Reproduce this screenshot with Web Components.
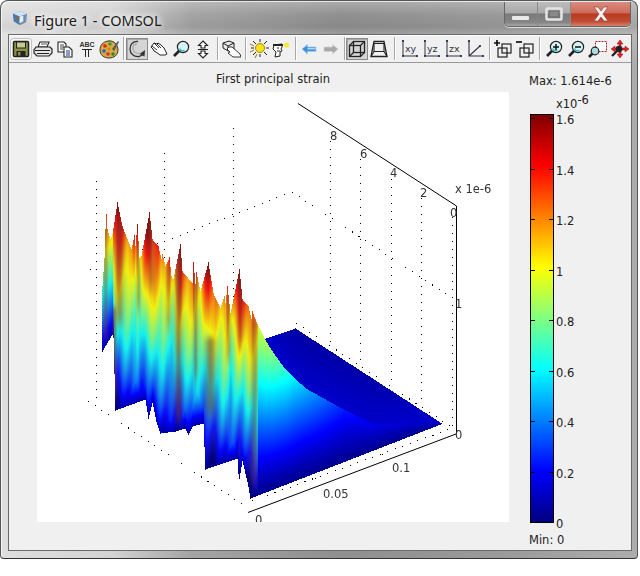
<!DOCTYPE html>
<html>
<head>
<meta charset="utf-8">
<title>Figure 1 - COMSOL</title>
<style>
body{margin:0;background:#fff;font-family:"DejaVu Sans",sans-serif;}
</style>
</head>
<body>
<figure-window label="Figure 1 - COMSOL">
  <fig-toolbar></fig-toolbar>
  <plot-panel></plot-panel>
</figure-window>

<script>
// toolbar icons, all on a 20x20 box
const lens = (cx, cy, extra) => `<path d="M${cx-4} ${cy+4}L${cx-9} ${cy+9}" stroke="#222" stroke-width="2.6"/><circle cx="${cx}" cy="${cy}" r="5.6" fill="#d6f4f6" stroke="#222" stroke-width="1.2"/><path d="M${cx-3.5} ${cy+1.500}a4 4 0 0 0 5 2" stroke="#2bb7c9" stroke-width="1.4" fill="none"/>${extra||''}`;
const axes = `<path d="M4 1.500V17H18" fill="none" stroke="#334" stroke-width="1"/><circle cx="4" cy="2" r="1.1" fill="#124"/><circle cx="18" cy="17" r="1.1" fill="#124"/><circle cx="4" cy="17" r="1" fill="#124"/>`;
const axisText = t => `${axes}<text x="6" y="12.500" font-family="DejaVu Sans" font-size="9.500" fill="#334">${t}</text>`;
const twoBoxes = sign => `<rect x="9" y="5" width="9" height="9" fill="none" stroke="#222" stroke-width="1.2"/><rect x="5" y="9" width="9" height="9" fill="none" stroke="#222" stroke-width="1.2"/>${sign}`;
const ICONS = {
  save:`<rect x="2.500" y="2.500" width="15" height="15" rx="1" fill="#8f8f48" stroke="#222" stroke-width="1.500"/><rect x="5.500" y="3" width="9" height="6" fill="#c9c98c" stroke="#222"/><rect x="5.500" y="12" width="9" height="5.500" fill="#222"/><rect x="7" y="13" width="2.500" height="3.500" fill="#8f8f48"/>`,
  print:`<path d="M7 3h9l-2 5H5z" fill="#fff" stroke="#222" stroke-width="1.100"/><path d="M3 8h14l2 2v4l-3 3H4l-3-3v-3z" fill="#e6e6e6" stroke="#222" stroke-width="1.200"/><path d="M2 11.500h15M4 14.500h12" stroke="#222"/><path d="M8 5h6" stroke="#555"/>`,
  copy:`<path d="M3 3h6l2 2v8H3z" fill="#fff" stroke="#222" stroke-width="1.100"/><path d="M5 6h4M5 8h4M5 10h3" stroke="#234" stroke-width=".9"/><path d="M9 8h5l3 3v7H9z" fill="#fff" stroke="#222" stroke-width="1.100"/><path d="M11 12h4M11 14h4M11 16h4" stroke="#139" stroke-width="1.100"/>`,
  abc:`<text x="10" y="8" text-anchor="middle" font-family="Liberation Sans" font-size="7" font-weight="700" fill="#333">ABC</text><path d="M5 10.500h10M8.500 10.500v7.500M11.500 10.500v7.500" stroke="#222" fill="none"/>`,
  palette:`<path d="M9 2c6-1 10 4 10 9s-4 8-9 8-9-3-9-8 3-8 8-9z" fill="#d9ab3f" stroke="#333"/><circle cx="6" cy="7" r="1.800" fill="#d22"/><circle cx="11" cy="5" r="1.700" fill="#2a9d3a"/><circle cx="5" cy="12" r="1.800" fill="#26c"/><circle cx="9" cy="15" r="1.800" fill="#c33"/><circle cx="14" cy="15" r="1.700" fill="#283"/><circle cx="10" cy="10" r="1.400" fill="#e07a20"/><path d="M13 10l6-8 1 1-5 9z" fill="#556"/>`,
  rotate:`<path d="M11 2.500C6 2 3 5 3 10c0 5 4 8 9 7.500l4-2" fill="none" stroke="#333" stroke-width="1.300"/><path d="M10 4.500C7 5 5.500 7.500 6 10.500c1 3 4 4.500 7 3.500" fill="none" stroke="#aaa" stroke-width="1.300"/><path d="M18 11l-.5 6.500-5-2.500z" fill="#333"/>`,
  pan:`<path d="M2 8l3-4 3 1 1-1 3 2 3 3 3 6-2 1-5 0-4-3-2-1-1-2z" fill="#fff" stroke="#222"/><path d="M5 4l5 5M8 5l4 4M3 7l5 4" stroke="#222" stroke-width=".9"/>`,
  zoom:lens(12,8),
  updown:`<path d="M10 2l4.500 4.500H12V9H8V6.500H5.500zM8 12h4v2.500h2.500L10 19l-4.500-4.500H8z" fill="#fff" stroke="#222" stroke-width="1.100"/><path d="M5 10.500h10" stroke="#222"/>`,
  hand:`<path d="M2 4l6-2 5 2v6l-6 2-5-3z" fill="#e6e6e6" stroke="#222"/><path d="M2 4l5 3 6-3M7 7v5" stroke="#222" fill="none"/><path d="M8 8l3 0 8 7 1 3-8 0-5-4 2-1-3-3z" fill="#fff" stroke="#222" stroke-width=".9"/>`,
  light:`<circle cx="11" cy="9" r="4.500" fill="#f6e21a" stroke="#9a8a10"/><path d="M11 0v3M11 15v3M2 9h3M17 9h3M4 2l3 3M18 2l-3 3M4 16l3-3M18 16l-3-3" stroke="#222"/><path d="M1 5l4 2M1 13l4-2M6 19l2-4" stroke="#8a7a10"/>`,
  head:`<path d="M3 6l8-1v3l-1 2 1 2-2 1v4l-5 1 1-5-3-3z" fill="#fff" stroke="#222"/><path d="M2 6h10" stroke="#222" stroke-width="2"/><path d="M6 9h2M6 12h3" stroke="#222"/><circle cx="15.500" cy="6" r="2.600" fill="#f6e83a"/>`,
  left:`<path d="M3 10l5.500-4.500v2.500h8.500v4.500H8.500v2.500z" fill="#3f8fdb" stroke="#a5cdf0" stroke-width=".8"/><path d="M8.500 9h8v1.500h-8z" fill="#a8d6f6"/>`,
  right:`<path d="M17 10l-5.500-4.500v2.500H3v4.500h8.500v2.500z" fill="#a8a8a8" stroke="#d0d0d0" stroke-width=".8"/>`,
  cube:`<rect x="2.500" y="6.500" width="11" height="11" fill="none" stroke="#222" stroke-width="1.300"/><rect x="6.500" y="2.500" width="11" height="11" fill="none" stroke="#222" stroke-width="1.300"/><path d="M2.500 6.500l4-4M13.500 6.500l4-4M2.500 17.500l4-4M13.500 17.500l4-4" stroke="#222" stroke-width="1.100"/>`,
  room:`<path d="M5 2.500h10l3 15H2z" fill="none" stroke="#222" stroke-width="1.300"/><path d="M5 4.500h10v8H5zM2 17.500l3-5M18 17.500l-3-5" fill="none" stroke="#222" stroke-width="1.100"/>`,
  xy:axisText('xy'),yz:axisText('yz'),zx:axisText('zx'),
  persp:`<path d="M4 2V17H18M4 17L15 7" fill="none" stroke="#334" stroke-width="1.100"/><circle cx="4" cy="2" r="1.100" fill="#124"/><circle cx="18" cy="17" r="1.100" fill="#124"/><circle cx="15" cy="7" r="1" fill="#124"/>`,
  add:twoBoxes(`<path d="M1 4h6M4 1v6" stroke="#111" stroke-width="1.700"/>`),
  remove:twoBoxes(`<path d="M1 3h6" stroke="#111" stroke-width="1.700"/>`),
  zoomin:lens(12,8,`<path d="M9 8h6M12 5v6" stroke="#111" stroke-width="1.500"/>`),
  zoomout:lens(12,8,`<path d="M9 8h6" stroke="#111" stroke-width="1.500"/>`),
  zoombox:`<rect x="7.500" y="2.500" width="11" height="10" fill="#fff" stroke="#a22" stroke-dasharray="2 1"/><path d="M5 14L1 18" stroke="#222" stroke-width="2.600"/><circle cx="7" cy="12" r="3.800" fill="#a8dde0" stroke="#222" stroke-width="1.200"/>`,
  move:`<path d="M10 1l3 4h-2v4h4V7l4 3-4 3v-2h-4v4h2l-3 4-3-4h2v-4H5v2l-4-3 4-3v2h4V5H7z" fill="#d22" stroke="#911" stroke-width=".5"/><path d="M2 17l5-5" stroke="#222" stroke-width="2.400"/><circle cx="9" cy="10" r="3.300" fill="#222"/>`
};

// title bar with the app icon and the three caption buttons
const titleTpl = document.createElement('template');
titleTpl.innerHTML = `
<style>
:host{display:flex;height:33px;align-items:flex-start;}
.ico{margin:9px 6px 0 3px;width:16px;height:16px;flex:none;}
.txt{font:14.500px "Noto Sans",sans-serif;color:#1a1a1a;margin-top:9px;line-height:20px;text-shadow:0 0 6px #fff,0 0 8px #fff,0 0 10px #eee;flex:1;}
.caps{display:flex;height:24px;margin-top:1px;border:1px solid #666;border-top:none;border-radius:0 0 5px 5px;overflow:hidden;box-shadow:0 1px 0 #ddd;}
.c{display:flex;align-items:center;justify-content:center;height:100%;border-right:1px solid #888;}
.min,.max{width:32px;background:linear-gradient(#bcbcbc,#aaaaaa 45%,#7a7a7a 50%,#858585 85%,#a8a8a8);}
.close{width:59px;border:none;background:linear-gradient(#d98c80,#cf6a58 45%,#b93a22 50%,#c04a32 80%,#d6806a);}
</style>
<svg class="ico" viewBox="0 0 17 17"><path d="M1 4l7-3 8 3-1 9-6 3-7-4z" fill="#6f8fb0"/><path d="M1 4l7 3 8-3-8-3z" fill="#cfe0ee"/><path d="M8 7v9l-6-4-1-8z" fill="#4b78ad"/><path d="M8 7l4-1v6l-4 2z" fill="#e7eef5"/><circle cx="6" cy="9" r="1.800" fill="#8a6a4a"/></svg>
<div class="txt"></div>
<div class="caps">
  <div class="c min"><svg width="18" height="12"><rect x="0" y="8" width="17" height="4" rx="1" fill="#e8e8e8"/></svg></div>
  <div class="c max"><svg width="18" height="14"><rect x="1.500" y="1.500" width="15" height="11" rx="1" fill="none" stroke="#e4e4e4" stroke-width="2.500"/><rect x="4" y="4" width="10" height="6" fill="#8a8a8a" stroke="#666"/></svg></div>
  <div class="c close"><svg width="20" height="16"><path d="M3 1h4l3 4 3-4h4l-5 7 5 7h-4l-3-4-3 4H3l5-7z" fill="#f2f0f0" stroke="#8a3a30" stroke-width=".6"/></svg></div>
</div>`;
class TitleBar extends HTMLElement {
  constructor(){
    super();
    this.attachShadow({mode:'open'});
    this.shadowRoot.appendChild(titleTpl.content.cloneNode(true));
  }
  set label(v){ this.shadowRoot.querySelector('.txt').textContent = v; }
}
customElements.define('title-bar', TitleBar);

const winTpl = document.createElement('template');
winTpl.innerHTML = `
<style>
:host{display:flex;flex-direction:column;width:638px;height:559px;box-sizing:border-box;padding:0 6px 8px 8px;
  border:1px solid #555;border-bottom-color:#333;border-radius:8px 8px 4px 4px;
  background:
    linear-gradient(rgba(255,255,255,.25),rgba(255,255,255,0) 14px,rgba(0,0,0,.05) 26px,rgba(255,255,255,.15) 34px,rgba(0,0,0,0) 60px),
    linear-gradient(90deg,#dedede 0,#d4d4d4 110px,#a4a4a4 190px,#8f8f8f 340px,#9a9a9a 500px,#adadad 100%);
  box-shadow:inset 1px 1px 0 rgba(255,255,255,.7);}
.client{display:flex;flex-direction:column;flex:1;background:#f0f0f0;border:1px solid #6a6a6a;margin:0 -1px -1px -1px;}
</style>
<title-bar></title-bar>
<div class="client"><slot></slot></div>`;
class FigureWindow extends HTMLElement {
  constructor(){
    super();
    this.attachShadow({mode:'open'});
    this.shadowRoot.appendChild(winTpl.content.cloneNode(true));
    this.shadowRoot.querySelector('title-bar').label = this.getAttribute('label');
  }
}
customElements.define('figure-window', FigureWindow);

const btnTpl = document.createElement('template');
btnTpl.innerHTML = `
<style>
:host{display:flex;align-items:center;justify-content:center;width:22px;height:22px;box-sizing:border-box;flex:none;}
:host([pressed]){background:#d4d4d4;border:1px solid #8a8a8a;box-shadow:inset 1px 1px 0 #aaa;}
:host([hot]){background:#f6f6f6;border:1px solid #c4c4c4;border-radius:3px;}
svg{width:20px;height:20px;flex:none;display:block;}
</style>
<svg viewBox="0 0 20 20"></svg>`;
class ToolBtn extends HTMLElement {
  constructor(){
    super();
    this.attachShadow({mode:'open'});
    this.shadowRoot.appendChild(btnTpl.content.cloneNode(true));
  }
  connectedCallback(){
    this.shadowRoot.querySelector('svg').innerHTML = ICONS[this.getAttribute('icon')];
  }
}
customElements.define('tool-btn', ToolBtn);

const barTpl = document.createElement('template');
barTpl.innerHTML = `
<style>
:host{display:flex;align-items:center;height:28px;padding-left:1px;border-bottom:1px solid #9a9a9a;background:#f0f0f0;box-shadow:inset 0 1px 0 #fff;box-sizing:border-box;flex:none;}
.sep{height:23px;flex:none;display:flex;justify-content:center;}
.sep::after{content:"";width:1px;height:100%;background:#a8a8a8;box-shadow:1px 0 0 #fff;}
</style>`;
// icon name, or a number for a separator of that width
const TOOLS = ['save','print','copy','abc','palette',6,'rotate','pan','zoom','updown',6,'hand',6,'light','head',6,'left','right',4,'cube','room',8,'xy','yz','zx','persp',6,'add','remove',7,'zoomin','zoomout','zoombox','move'];
class FigToolbar extends HTMLElement {
  constructor(){
    super();
    this.attachShadow({mode:'open'});
    this.shadowRoot.appendChild(barTpl.content.cloneNode(true));
    for (const t of TOOLS) {
      if (typeof t === 'number') {
        const s = document.createElement('div');
        s.className = 'sep';
        s.style.width = t + 'px';
        this.shadowRoot.appendChild(s);
      } else {
        const b = document.createElement('tool-btn');
        b.setAttribute('icon', t);
        if (t === 'rotate' || t === 'cube') b.setAttribute('pressed', '');
        if (t === 'save') b.setAttribute('hot', '');
        this.shadowRoot.appendChild(b);
      }
    }
  }
}
customElements.define('fig-toolbar', FigToolbar);

// the colour scale
const scaleTpl = document.createElement('template');
scaleTpl.innerHTML = `
<style>
:host{display:block;position:relative;width:24px;height:409px;box-sizing:border-box;margin-left:1px;border:1px solid #000;
  background:linear-gradient(to top,#000080,#0000ff 12.5%,#00ffff 37.5%,#ffff00 62.5%,#ff0000 87.5%,#800000);font:11.500px "DejaVu Sans",sans-serif;color:#222;}
.ticks{position:absolute;left:0;right:0;top:3px;bottom:-1px;display:flex;flex-direction:column;justify-content:space-between;}
.t{height:1px;position:relative;background:linear-gradient(90deg,#000 4px,transparent 4px,transparent 18px,#000 18px);}
.t span{position:absolute;left:25px;top:-5px;line-height:14px;white-space:nowrap;}
</style>
<div class="ticks"></div>`;
class ColorScale extends HTMLElement {
  constructor(){
    super();
    this.attachShadow({mode:'open'});
    this.shadowRoot.appendChild(scaleTpl.content.cloneNode(true));
    const box = this.shadowRoot.querySelector('.ticks');
    for (const v of ['1.6','1.4','1.2','1','0.8','0.6','0.4','0.2','0']) {
      const t = document.createElement('div');
      t.className = 't';
      t.innerHTML = `<span>${v}</span>`;
      box.appendChild(t);
    }
  }
}
customElements.define('color-scale', ColorScale);

// piecewise linear lookup over [x,y] points
function pl(pts, x){
  if (x <= pts[0][0]) return pts[0][1];
  for (let i = 1; i < pts.length; i++) {
    if (x <= pts[i][0]) {
      const a = pts[i-1], b = pts[i];
      return a[1] + (b[1]-a[1])*(x-a[0])/(b[0]-a[0]);
    }
  }
  return pts[pts.length-1][1];
}
const clamp = v => Math.max(0, Math.min(1, v));
const smooth = (a, b, v) => { const t = clamp((v-a)/(b-a)); return t*t*(3-2*t); };
function jet(v){
  const t = clamp(v/1.614);
  return [clamp(1.5-Math.abs(4*t-3))*255, clamp(1.5-Math.abs(4*t-2))*255, clamp(1.5-Math.abs(4*t-1))*255];
}

// profile of the surface, in window pixels
const TOP = [[102,285],[104,257],[105,228],[106,213],[107,228],[110,238],[112,233],[117,201],[122,225],[127,238],[131,248],[134,234],[135,245],[137,223],[139,257],[141,255],[149,211],[152,238],[158,245],[161,258],[162,253],[165,265],[169,256],[171,275],[173,278],[180,243],[182,270],[192,282],[193,261],[195,283],[196,271],[200,290],[208,261],[213,292],[220,307],[224,295],[225,302],[227,285],[230,312],[239,268],[242,298],[248,305],[251,318],[252,310],[255,318],[264,337],[272,350],[285,368],[295,378],[307,388],[343,408],[373,423],[443,423]];
const BOTTOM = [[102,350],[112,333],[113,336],[115,409],[145,398],[148,417],[152,401],[156,420],[160,432],[175,430],[185,427],[188,433],[192,425],[203,422],[205,468],[237,457],[238.5,480],[242,459],[248,485],[250,497],[443,422]];
const BACK = [[263,338],[295,327],[443,423]];
const PLATE_TOP = [[258,.92],[272,.8],[295,.55],[307,.45],[343,.22],[373,.14],[443,.05]];
// dark sides of the ridges: centre x, half width, strength, y0, y1
const STRIPS = [[105,2.5,.4,215,350],[119,4,.45,215,335],[114,2,.55,300,409],[138,2,.35,225,320],[151,3,.35,215,300],[168,2.5,.3,258,340],[178,3.5,.55,245,432],[195,2.5,.45,262,390],[210,5,.55,330,425],[228,2.5,.35,286,370],[240,3,.35,270,355],[254,3.5,.4,312,495]];

const plotTpl = document.createElement('template');
plotTpl.innerHTML = `
<style>
:host{display:block;position:relative;width:472px;height:430px;background:#fff;flex:none;}
svg,canvas{position:absolute;left:0;top:0;}
text{font:11.500px "DejaVu Sans",sans-serif;fill:#333;}
</style>
<svg class="grid" width="472" height="430" viewBox="37 91 472 430">
  <g class="dots" fill="none" stroke="#000" stroke-dasharray="1 7" shape-rendering="crispEdges"></g>
  <g fill="none" stroke="#000" stroke-width="1">
    <path d="M298 102.500L456.500 205V433"/>
    <path d="M456 433L248 511.500"/>
  </g>
</svg>
<canvas width="472" height="430"></canvas>
<svg width="472" height="430" viewBox="37 91 472 430">
  <text x="330" y="139">8</text><text x="360" y="157">6</text><text x="390" y="176">4</text><text x="420" y="196">2</text><text x="450" y="216">0</text>
  <text x="455" y="192">x 1e-6</text>
  <text x="455" y="307">1</text><text x="455" y="438">0</text>
  <text x="392" y="471">0.1</text><text x="323" y="497">0.05</text><text x="255" y="523">0</text>
</svg>`;
class SurfacePlot extends HTMLElement {
  constructor(){
    super();
    this.attachShadow({mode:'open'});
    this.shadowRoot.appendChild(plotTpl.content.cloneNode(true));
    this.drawGrid();
    this.drawSurface();
  }
  drawGrid(){
    const lines = [
      [96.5,180,96.5,400],[164.5,152,164.5,372],[233.5,127,233.5,350],
      [330.5,140,330.5,345],[360.5,158,360.5,365],[391.5,178,391.5,385],[421.5,197,421.5,405],[452.5,216,452.5,425],
      [90,269,292,191],[292,191,452,297],[296,322,450,425],
      [88,400,248,507],[164,372,320,481],[233,345,385,455],[252,500,450,428]
    ];
    this.shadowRoot.querySelector('.dots').innerHTML = lines.map(l => `<line x1="${l[0]}" y1="${l[1]}" x2="${l[2]}" y2="${l[3]}"/>`).join('');
  }
  pixel(x, y){
    const top = pl(TOP, x), bot = pl(BOTTOM, x);
    const back = x >= 263 ? pl(BACK, x) : 1e9;
    if (y >= back && y < top) {
      return jet(.12 - .07*clamp((top-y)/60));
    }
    if (y < top || y > bot || x < 102 || x > 443) return null;
    if (x >= 258) {
      const t = (bot-y)/(bot-top);
      return jet(pl(PLATE_TOP, x)*Math.pow(t, 1.1) + .025);
    }
    // value goes with height above a base line sloping to the right
    let v = (414 + .55*(x-117) - y)/140;
    // spikes run hotter than the valleys between them
    let mean = 0;
    for (let d = -10; d <= 10; d += 2) mean += pl(TOP, x+d)/11;
    v += (mean-top)*.007*(1-clamp((y-top)/150));
    // long soft streaks running down the folds
    v += .06*Math.sin((x + .07*(y-300))*.5) + .05*Math.sin((x - .1*(y-300))*.21 + 1);
    v = Math.min(v, (bot-y)/(x < 113 ? 100 : 65) + .06);
    let c = jet(v);
    // the lit faces look a little washed out
    const wash = .14*smooth(0, 40, bot-y);
    c = [c[0]*(1-wash)+150*wash, c[1]*(1-wash)+150*wash, c[2]*(1-wash)+120*wash];
    for (const s of STRIPS) {
      const dx = (x-s[0])/s[1];
      const m = s[2]*Math.exp(-dx*dx)*smooth(s[3], s[3]+12, y)*(1-smooth(s[4]-25, s[4], y));
      c = [c[0]*(1-m)+115*m, c[1]*(1-m)+60*m, c[2]*(1-m)+45*m];
    }
    return c;
  }
  drawSurface(){
    const ctx = this.shadowRoot.querySelector('canvas').getContext('2d');
    const img = ctx.createImageData(472, 430);
    for (let j = 0; j < 430; j++) {
      for (let i = 0; i < 472; i++) {
        const c = this.pixel(i+37, j+91);
        if (!c) continue;
        const o = (j*472+i)*4;
        img.data[o] = c[0]; img.data[o+1] = c[1]; img.data[o+2] = c[2]; img.data[o+3] = 255;
      }
    }
    ctx.putImageData(img, 0, 0);
  }
}
customElements.define('surface-plot', SurfacePlot);

const panelTpl = document.createElement('template');
panelTpl.innerHTML = `
<style>
:host{display:flex;flex:1;padding-left:28px;font:11.500px "DejaVu Sans",sans-serif;color:#222;}
.left{display:flex;flex-direction:column;width:472px;flex:none;}
.title{height:29px;box-sizing:border-box;padding-top:9px;line-height:14px;text-align:center;color:#222;}
.right{display:flex;flex-direction:column;margin-left:20px;}
.max{margin-top:11px;line-height:14px;height:14px;white-space:nowrap;}
.exp{margin:9px 0 0 27px;height:17px;line-height:14px;white-space:nowrap;}
.exp sup{font-size:11.500px;line-height:0;position:relative;top:1px;}
.min{margin-top:10px;line-height:14px;}
</style>
<div class="left">
  <div class="title">First principal strain</div>
  <surface-plot></surface-plot>
</div>
<div class="right">
  <div class="max">Max: 1.614e-6</div>
  <div class="exp">x10<sup>-6</sup></div>
  <color-scale></color-scale>
  <div class="min">Min: 0</div>
</div>`;
class PlotPanel extends HTMLElement {
  constructor(){
    super();
    this.attachShadow({mode:'open'});
    this.shadowRoot.appendChild(panelTpl.content.cloneNode(true));
  }
}
customElements.define('plot-panel', PlotPanel);
</script>
</body>
</html>
